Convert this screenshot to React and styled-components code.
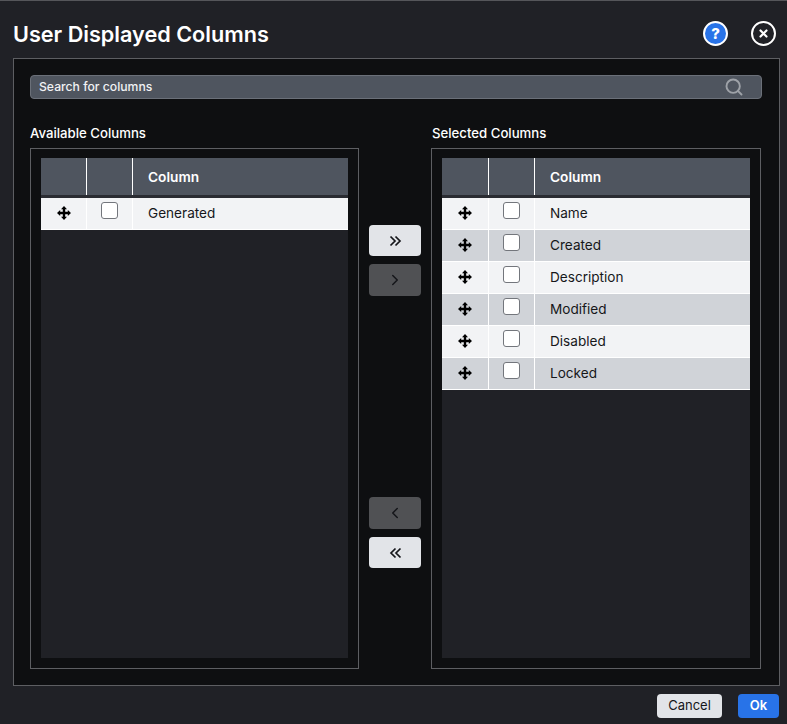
import React from 'react';
import styled, { createGlobalStyle } from 'styled-components';
import { ChevronRight, ChevronLeft, Search } from 'lucide-react';

const Global = createGlobalStyle`
  html, body { margin: 0; padding: 0; background: #202126; }
  * { box-sizing: border-box; }
  body { font-family: Inter, "Noto Sans", sans-serif; }
`;

const Dialog = styled.div`
  width: 787px; height: 724px; background: #202126; border-top: 1px solid #55565a;
  display: flex; flex-direction: column; padding: 0 8px 0 13px;
`;
const Header = styled.header`
  height: 57px; display: flex; align-items: center; justify-content: space-between; padding: 8px 3px 0 0;
`;
const Title = styled.h1`margin: 0; color: #fff; font-size: 21.65px; font-weight: 600;`;
const HeaderIcons = styled.div`display: flex; gap: 23px; align-items: center;`;
const RoundIcon = styled.div`
  width: 25px; height: 25px; border-radius: 50%; border: 2px solid #fff;
  background: ${p => p.$bg || 'transparent'}; color: #fff;
  display: flex; align-items: center; justify-content: center;
  font-size: 15px; font-weight: 800; line-height: 1;
`;
const Panel = styled.main`
  width: 767px; height: 628px; background: #0e0f11; border: 1px solid #5d5e62;
  padding: 16px 17px 16px 16px; display: flex; flex-direction: column;
`;
const SearchBar = styled.div`
  height: 24px; background: #4f555f; border: 1px solid #6b7079; border-radius: 4px;
  display: flex; align-items: center; justify-content: space-between; padding: 0 17px 1px 8px;
  color: #f1f2f4; font-size: 12.2px; font-weight: 500;
  svg { color: #9ea2a8; margin-top: 1px; }
`;
const Columns = styled.div`display: flex; margin-top: 27px;`;
const Side = styled.section`width: ${p => p.$w}px; display: flex; flex-direction: column;`;
const Label = styled.div`color: #fff; font-size: 13.2px; font-weight: 500; height: 22px; line-height: 14px; padding-left: ${p => p.$inset || 0}px;`;
const TableBox = styled.div`height: 521px; border: 1px solid #5d5e62; padding: 9px 10px;`;
const Table = styled.div`height: 500px; background: #202126; display: flex; flex-direction: column;`;
const HeadRow = styled.div`
  height: 40px; background: #4f555f; border-bottom: 3px solid #2a2c32;
  display: grid; grid-template-columns: ${p => p.$col}px 46px 1fr;
`;
const HeadCell = styled.div`
  border-right: ${p => (p.$last ? 'none' : '1px solid #fff')};
  padding-left: 15px; display: flex; align-items: center;
  color: #fff; font-size: 13.7px; font-weight: 600;
`;
const Row = styled.div`
  height: 32px; background: ${p => (p.$alt ? '#d0d3d8' : '#f2f3f5')}; border-bottom: 1px solid #fff;
  display: grid; grid-template-columns: ${p => p.$col}px 46px 1fr;
`;
const Cell = styled.div`
  border-right: 1px solid #fff; padding-bottom: 1px; display: flex; align-items: center; justify-content: center;
`;
const NameCell = styled.div`
  padding: 0 0 1px 15px; display: flex; align-items: center; color: #16171a; font-size: 13.6px; font-weight: 400;
`;
const Check = styled.div`
  width: 17px; height: 17px; background: #fff; border: 1px solid #73767c; border-radius: 3px; margin-top: -5px;
`;
const Middle = styled.div`
  width: 72px; margin-top: 22px; padding: 77px 10px 101px; display: flex; flex-direction: column; justify-content: space-between;
`;
const Group = styled.div`display: flex; flex-direction: column; gap: 8px;`;
const Arrow = styled.div`
  width: 52px; height: ${p => (p.$off ? 32 : 31)}px; border-radius: 4px;
  background: ${p => (p.$off ? '#505154' : '#e2e4e8')}; color: #15161a;
  display: flex; align-items: center; justify-content: center;
`;
const Footer = styled.footer`display: flex; justify-content: flex-end; gap: 16px; padding-top: 8px;`;
const Btn = styled.button`
  height: 24px; width: ${p => p.$w}px; border: none; border-radius: 4px; padding: 0 0 2px;
  background: ${p => (p.$primary ? '#2873e8' : '#e2e4e8')}; color: ${p => (p.$primary ? '#fff' : '#15161a')};
  font-family: inherit; font-size: 13px; font-weight: ${p => (p.$primary ? 600 : 400)};
`;

const DragIcon = () => (
  <svg width="14" height="14" viewBox="0 0 14 14" fill="#000" aria-hidden="true">
    <path d="M7 0 L10 3.2 H8.2 V5.8 H10.8 V4 L14 7 L10.8 10 V8.2 H8.2 V10.8 H10 L7 14 L4 10.8 H5.8 V8.2 H3.2 V10 L0 7 L3.2 4 V5.8 H5.8 V3.2 H4 Z" />
  </svg>
);

const DoubleChevron = ({ left }) => (
  <svg width="13" height="12" viewBox="0 0 13 12" fill="none" stroke="currentColor" strokeWidth="1.7" aria-hidden="true">
    <path d={left ? 'M6.5 1.5 L2 6 L6.5 10.5 M11.5 1.5 L7 6 L11.5 10.5' : 'M1.5 1.5 L6 6 L1.5 10.5 M6.5 1.5 L11 6 L6.5 10.5'} />
  </svg>
);

const TableView = ({ rows, w, label, col, inset }) => (
  <Side $w={w}>
    <Label $inset={inset}>{label}</Label>
    <TableBox>
      <Table>
        <HeadRow $col={col}>
          <HeadCell />
          <HeadCell />
          <HeadCell $last>Column</HeadCell>
        </HeadRow>
        {rows.map((r, i) => (
          <Row key={r} $alt={i % 2 === 1} $col={col}>
            <Cell><DragIcon /></Cell>
            <Cell><Check /></Cell>
            <NameCell>{r}</NameCell>
          </Row>
        ))}
      </Table>
    </TableBox>
  </Side>
);

export default function App() {
  return (
    <>
      <Global />
      <Dialog>
        <Header>
          <Title>User Displayed Columns</Title>
          <HeaderIcons>
            <RoundIcon $bg="#2873e8">?</RoundIcon>
            <RoundIcon>
              <svg width="11" height="11" viewBox="0 0 11 11" stroke="#fff" strokeWidth="2.2" strokeLinecap="round" aria-hidden="true">
                <path d="M2.5 2.5 L8.5 8.5 M8.5 2.5 L2.5 8.5" />
              </svg>
            </RoundIcon>
          </HeaderIcons>
        </Header>
        <Panel>
          <SearchBar>
            <span>Search for columns</span>
            <Search size={20} strokeWidth={2.3} />
          </SearchBar>
          <Columns>
            <TableView label="Available Columns" w={329} rows={['Generated']} col={46} />
            <Middle>
              <Group>
                <Arrow><DoubleChevron /></Arrow>
                <Arrow $off><ChevronRight size={18} /></Arrow>
              </Group>
              <Group>
                <Arrow $off><ChevronLeft size={18} /></Arrow>
                <Arrow><DoubleChevron left /></Arrow>
              </Group>
            </Middle>
            <TableView label="Selected Columns" w={330} rows={['Name', 'Created', 'Description', 'Modified', 'Disabled', 'Locked']} col={47} inset={1} />
          </Columns>
        </Panel>
        <Footer>
          <Btn $w={65}>Cancel</Btn>
          <Btn $w={41} $primary>Ok</Btn>
        </Footer>
      </Dialog>
    </>
  );
}
